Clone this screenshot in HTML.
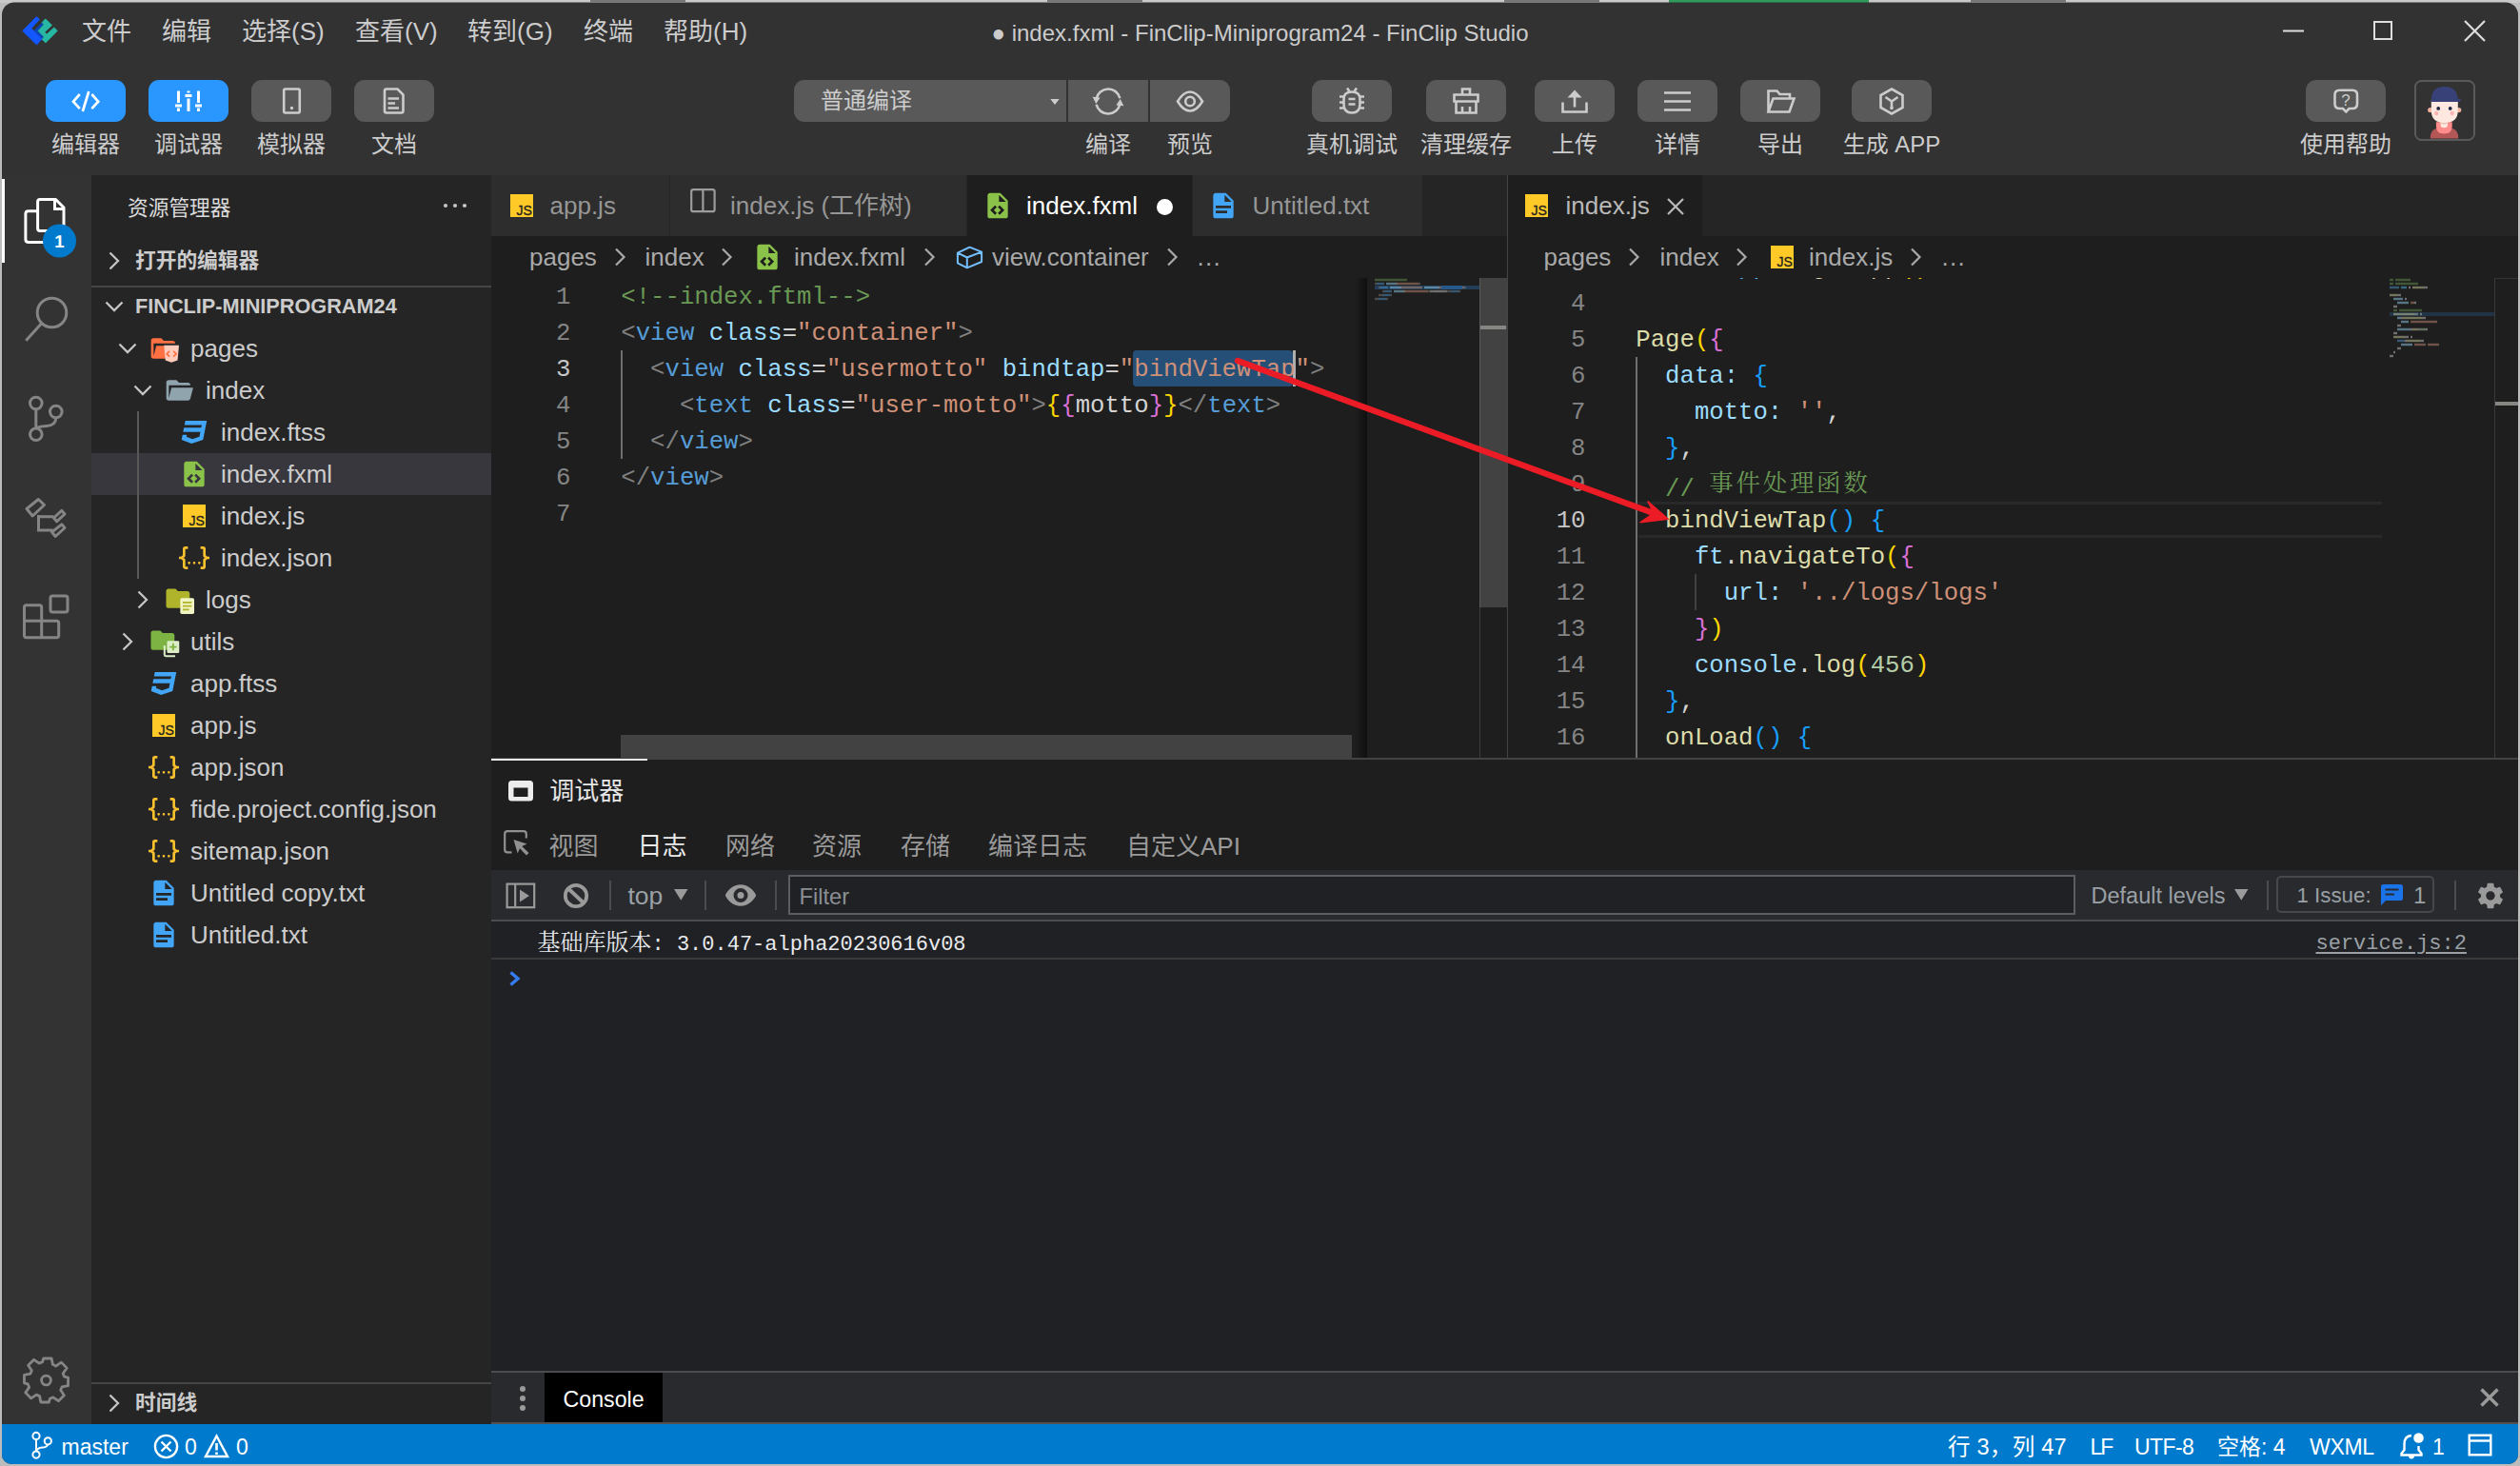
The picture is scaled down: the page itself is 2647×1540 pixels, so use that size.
<!DOCTYPE html>
<html lang="zh-CN">
<head>
<meta charset="utf-8">
<title>index.fxml - FinClip-Miniprogram24 - FinClip Studio</title>
<style>
*{box-sizing:border-box;margin:0;padding:0}
html,body{width:2647px;height:1540px;overflow:hidden}
body{position:relative;background:#bcbcbc;font-family:"Liberation Sans","Noto Sans CJK SC",sans-serif;color:#ccc}
.abs{position:absolute}
#win{position:absolute;left:0;top:0;width:2647px;height:1540px;background:#323233;clip-path:inset(2.500px 2px 2px 2px round 13px 13px 10px 10px)}
svg{display:block;overflow:visible;position:absolute}
.mono{font-family:"Liberation Mono","Noto Sans CJK SC",monospace}
/* ---------- title / menu ---------- */
#menubar{position:absolute;left:0;top:3px;width:2647px;height:62px}
.menu{position:absolute;top:0;height:62px;line-height:60px;font-size:26px;color:#ccc;white-space:nowrap}
#title{position:absolute;left:0;width:2647px;top:0;height:62px;line-height:63px;text-align:center;font-size:24px;color:#ccc;white-space:nowrap}
/* ---------- toolbar ---------- */
.tbtn{position:absolute;top:84px;width:84px;height:44px;border-radius:11px;background:#595959}
.tbtn.on{background:#2997ff}
.tbtn svg{left:0;top:0}
.tlabel{position:absolute;top:134px;height:36px;line-height:36px;font-size:24px;color:#ccc;text-align:center;white-space:nowrap;width:160px;margin-left:-80px}
.ic{fill:none;stroke:#ccc;stroke-width:2.6;stroke-linecap:butt;stroke-linejoin:miter}
</style>
</head>
<body>
<!-- desktop remnants above the window -->
<div class="abs" style="left:0;top:0;width:2647px;height:3px;background:#c9c9c9"></div>
<div class="abs" style="left:1753px;top:0;width:210px;height:3px;background:#2e9a5c"></div>
<div class="abs" style="left:620px;top:0;width:100px;height:2px;background:#777"></div>
<div class="abs" style="left:1100px;top:0;width:100px;height:2px;background:#777"></div>
<div class="abs" style="left:1580px;top:0;width:100px;height:2px;background:#777"></div>
<div class="abs" style="left:2070px;top:0;width:100px;height:2px;background:#777"></div>
<div id="win">
<!-- MENUBAR -->
<div id="menubar">
  <div id="title">● index.fxml - FinClip-Miniprogram24 - FinClip Studio</div>
  <svg style="left:0;top:-3px" width="80" height="60" viewBox="0 0 80 60">
    <path d="M38.300 17.600 L41.600 20.400 L32.900 29.800 L44.200 40.800 L38.500 47 L23.700 32.400 Z" fill="#1257ff" stroke="#1257ff" stroke-width="0.8" stroke-linejoin="round"/>
    <path d="M44 23.800 L46.200 25.600 L40 32.300 L46.200 38.700 L44 41.100 L35.700 31.900 Z" fill="#0b44b8"/>
    <path d="M47.700 19.800 L54.700 26.400 L47 33.700 L49 36 L56.900 28.700 L60.300 32.400 L47.900 45 L44 41.200 L46.200 38.800 L40 32.400 L46.200 25.600 L44 23.800 Z" fill="#27b8a4" stroke="#27b8a4" stroke-width="0.6" stroke-linejoin="round"/>
  </svg>
  <div class="menu" style="left:86px">文件</div>
  <div class="menu" style="left:170px">编辑</div>
  <div class="menu" style="left:254px">选择(S)</div>
  <div class="menu" style="left:373px">查看(V)</div>
  <div class="menu" style="left:491px">转到(G)</div>
  <div class="menu" style="left:613px">终端</div>
  <div class="menu" style="left:697px">帮助(H)</div>
  <!-- window controls -->
  <svg style="left:2396px;top:16px" width="220" height="28" viewBox="0 0 220 28">
    <path d="M2 13.5 H24" stroke="#ddd" stroke-width="2" fill="none"/>
    <rect x="98" y="4" width="18" height="18" stroke="#ddd" stroke-width="2" fill="none"/>
    <path d="M193 3 L214 24 M214 3 L193 24" stroke="#ddd" stroke-width="2.2" fill="none"/>
  </svg>
</div>
<!-- TOOLBAR -->
<div id="toolbar">
  <div class="tbtn on" style="left:48px"><svg width="84" height="44" viewBox="0 0 84 44"><path d="M35.800 15 L29 22.700 L35.800 30.200 M48.400 15 L55.200 22.700 L48.400 30.200 M45.300 12 L38.800 33" fill="none" stroke="#fff" stroke-width="2.700"/></svg></div>
  <div class="tlabel" style="left:90px">编辑器</div>
  <div class="tbtn on" style="left:156px"><svg width="84" height="44" viewBox="0 0 84 44"><path d="M31.5 11.5 V24 M31.5 29.5 V33 M28 27 H35 M42 11.5 V13.5 M42 19.5 V33 M38.5 16.5 H45.5 M52.5 11.5 V24 M52.5 29.5 V33 M49 27 H56" fill="none" stroke="#fff" stroke-width="3"/></svg></div>
  <div class="tlabel" style="left:198px">调试器</div>
  <div class="tbtn" style="left:264px"><svg width="84" height="44" viewBox="0 0 84 44"><rect x="34.2" y="9.5" width="16.6" height="25" rx="1.5" class="ic"/><circle cx="42.5" cy="29.5" r="1.7" fill="#ccc"/></svg></div>
  <div class="tlabel" style="left:306px">模拟器</div>
  <div class="tbtn" style="left:372px"><svg width="84" height="44" viewBox="0 0 84 44"><path d="M34 9.5 H45.5 L51.5 15.5 V32.5 Q51.5 34.5 49.5 34.5 H34 Q32 34.5 32 32.5 V11.5 Q32 9.5 34 9.5 Z" class="ic"/><path d="M35.5 19.5 H47 M35.5 24.5 H43 M35.5 29.5 H47" class="ic" stroke-width="2.4"/></svg></div>
  <div class="tlabel" style="left:414px">文档</div>

  <!-- compile group -->
  <div class="abs" style="left:834px;top:84px;width:286px;height:44px;background:#595959;border-radius:11px 0 0 11px"></div>
  <div class="abs" style="left:862px;top:84px;height:44px;line-height:44px;font-size:24px;color:#ccc;white-space:nowrap">普通编译</div>
  <svg style="left:1103px;top:104px" width="10" height="6" viewBox="0 0 10 6"><path d="M0.300 0 H9.700 L5 6 Z" fill="#ccc"/></svg>
  <div class="abs" style="left:1122px;top:84px;width:84px;height:44px;background:#595959"><svg width="84" height="44" viewBox="0 0 84 44" style="left:0;top:0"><path d="M54.400 19.200 A12.700 12.700 0 0 0 29.600 19.800 M29.600 25.800 A12.700 12.700 0 0 0 54.400 25.200" class="ic" stroke-width="2.600"/><path d="M25.600 17.800 L33.600 18.600 L29.300 25 Z M58.400 27.200 L50.400 26.400 L54.700 20 Z" fill="#ccc"/></svg></div>
  <div class="abs" style="left:1208px;top:84px;width:84px;height:44px;background:#595959;border-radius:0 11px 11px 0"><svg width="84" height="44" viewBox="0 0 84 44" style="left:0;top:0"><path d="M29 22.5 Q35 12.5 42 12.5 Q49 12.5 55 22.5 Q49 32.5 42 32.5 Q35 32.5 29 22.5 Z" class="ic"/><circle cx="42" cy="22.5" r="4.8" class="ic"/></svg></div>
  <div class="tlabel" style="left:1164px">编译</div>
  <div class="tlabel" style="left:1250px">预览</div>

  <!-- right group -->
  <div class="tbtn" style="left:1378px"><svg width="84" height="44" viewBox="0 0 84 44"><path d="M33.5 20 Q33.5 12.5 42 12.5 Q50.5 12.5 50.5 20 V25.5 Q50.5 34.5 42 34.5 Q33.5 34.5 33.5 25.5 Z" class="ic"/><path d="M38.5 20 H45.5 M38.5 25.5 H45.5" class="ic"/><path d="M29 17.5 H33 M29 23.5 H33 M29 29.5 H33 M51 17.5 H55 M51 23.5 H55 M51 29.5 H55 M37 8.5 L39.5 12 M47 8.5 L44.5 12" class="ic" stroke-width="2.2"/></svg></div>
  <div class="tlabel" style="left:1420px">真机调试</div>
  <div class="tbtn" style="left:1498px"><svg width="84" height="44" viewBox="0 0 84 44"><path d="M38 15.5 V9.5 H46 V15.5 M29.5 15.5 H54.5 V22.5 H29.5 Z M31.5 22.5 V34.5 H52.5 V22.5 M38 28 V34.5 M46 28 V34.5" class="ic"/></svg></div>
  <div class="tlabel" style="left:1540px">清理缓存</div>
  <div class="tbtn" style="left:1612px"><svg width="84" height="44" viewBox="0 0 84 44"><path d="M29.5 23.5 V33.5 H54.5 V23.5 M42 28.5 V14" class="ic" stroke-width="2.8"/><path d="M34.5 18.5 L42 10.5 L49.5 18.5 Z" fill="#ccc"/></svg></div>
  <div class="tlabel" style="left:1654px">上传</div>
  <div class="tbtn" style="left:1720px"><svg width="84" height="44" viewBox="0 0 84 44"><path d="M28 13.5 H56 M28 22.5 H56 M28 31.5 H56" class="ic" stroke-width="2.4"/></svg></div>
  <div class="tlabel" style="left:1762px">详情</div>
  <div class="tbtn" style="left:1828px"><svg width="84" height="44" viewBox="0 0 84 44"><path d="M29.5 33.5 V11.5 H38.5 L41.5 15 H52 V19.5 M29.5 33.5 L34.5 19.5 H56.5 L51.5 33.5 Z" class="ic"/></svg></div>
  <div class="tlabel" style="left:1870px">导出</div>
  <div class="tbtn" style="left:1945px"><svg width="84" height="44" viewBox="0 0 84 44"><path d="M42 9.5 L53.5 16 V29 L42 35.5 L30.5 29 V16 Z" class="ic"/><path d="M35.5 18 L42 22.5 L48.5 18 M42 22.5 V29" class="ic"/><circle cx="42" cy="29.5" r="1.8" fill="#ccc"/></svg></div>
  <div class="tlabel" style="left:1987px">生成 APP</div>

  <div class="tbtn" style="left:2422px"><svg width="84" height="44" viewBox="0 0 84 44"><path d="M35.500 10.800 H49 Q54 10.800 54 15.800 V25 Q54 30 49 30 H45.500 L42.300 33.400 L39 30 H35.500 Q30.500 30 30.500 25 V15.800 Q30.500 10.800 35.500 10.800 Z" class="ic" stroke-width="1.800"/></svg><div class="abs" style="left:0;top:8.500px;width:84px;text-align:center;font-size:17px;line-height:26px;color:#ccc">?</div></div>
  <div class="tlabel" style="left:2464px">使用帮助</div>
  <!-- avatar -->
  <svg style="left:2536px;top:84px" width="64" height="64" viewBox="0 0 64 64">
    <clipPath id="avc"><rect x="2" y="2" width="60" height="59.500" rx="5"/></clipPath>
    <g clip-path="url(#avc)">
      <path d="M16.900 64 V60 Q16.900 49.500 31.500 49.500 Q46.100 49.500 46.100 60 V64 Z" fill="#b35656"/>
      <path d="M22.900 44.300 H39.700 V48.500 Q39.700 56.600 31.300 56.600 Q22.900 56.600 22.900 48.500 Z" fill="#ff8b8b"/>
      <path d="M27.600 43 H35 V47.500 Q35 50.300 31.300 50.300 Q27.600 50.300 27.600 47.500 Z" fill="#ffe8e0"/>
      <path d="M27.600 44 H35 V45.800 Q31.300 47.500 27.600 45.800 Z" fill="#f0c4b4"/>
      <circle cx="16.800" cy="31.600" r="2.700" fill="#f0b09c"/><circle cx="46.600" cy="31.600" r="2.700" fill="#f0b09c"/>
      <path d="M17.800 21 H45.800 V32 Q45.800 45 31.800 45 Q17.800 45 17.800 32 Z" fill="#ffe8e0"/>
      <path d="M17.800 22.900 V21 Q17.800 6.900 31.800 6.900 Q44.500 6.900 45.700 19.800 L49.400 20.600 Q49 23.200 46 22.900 Z" fill="#384278"/>
      <circle cx="25.200" cy="29.900" r="1.900" fill="#1e2240"/><circle cx="37.700" cy="29.900" r="1.900" fill="#1e2240"/>
      <circle cx="23.200" cy="35" r="2.200" fill="#ffb3b3"/><circle cx="39.700" cy="35" r="2.200" fill="#ffb3b3"/>
    </g>
    <rect x="1" y="1" width="62" height="62" rx="6.500" fill="none" stroke="#5a5a5a" stroke-width="2"/>
  </svg>
</div>
<!-- ACTIVITY BAR -->
<div id="activity" class="abs" style="left:0;top:184px;width:96px;height:1312px;background:#333">
  <div class="abs" style="left:2px;top:4px;width:2.500px;height:88px;background:#fff"></div>
</div>
<svg style="left:0;top:184px" width="96" height="1312" viewBox="0 184 96 1312">
  <g fill="none" stroke="#fff" stroke-width="3" stroke-linejoin="round">
    <path d="M42 209.5 H58.5 L67 218 V242.5 H42 Q39.6 242.5 39.6 240 V212 Q39.6 209.5 42 209.5 Z"/>
    <path d="M57.5 210 V219.5 H66.5" stroke-linejoin="miter"/>
    <path d="M39 221.7 H29.8 Q26.9 221.7 26.9 224.6 V251.5 Q26.9 254.4 29.8 254.4 H50"/>
  </g>
  <circle cx="62.5" cy="253" r="17.5" fill="#007acc"/>
  <g fill="none" stroke="#858585" stroke-width="3" stroke-linejoin="round">
    <!-- search -->
    <circle cx="54.5" cy="328.5" r="15.3"/>
    <path d="M43.8 339.5 L27.3 357.8"/>
    <!-- source control -->
    <circle cx="37.8" cy="423.5" r="6.3"/>
    <circle cx="58.8" cy="432.5" r="6.3"/>
    <circle cx="37.8" cy="456.3" r="6.3"/>
    <path d="M37.8 430 V450 M58.8 439 Q58.5 447 49 447.5 Q40 448 38.3 450"/>
    <!-- flow icon -->
    <path d="M28 534.500 L40.400 524.500 L46.500 530.500 L34.200 542 Z"/>
    <path d="M56.500 544 L64.800 536.300 L68 540 L59.600 547.800 Z"/>
    <path d="M54.500 559 L64.800 550.800 L68 554.500 L58.200 563.500 Z"/>
    <path d="M40.500 541 V557 H55.500 M40.500 542.800 H56.500" stroke-linejoin="miter"/>
    <!-- extensions -->
    <path d="M25.5 652.3 V638 Q25.5 635.8 27.7 635.8 H41.5 Q43.7 635.8 43.7 638 V652.3 H59.5 Q61.7 652.3 61.7 654.5 V667.5 Q61.7 669.7 59.5 669.7 H27.7 Q25.5 669.7 25.5 667.5 V652.3 H43.7 V669.7"/>
    <rect x="53" y="626" width="18" height="17" rx="2.2"/>
  </g>
  <!-- gear -->
  <g transform="translate(48.5 1450) scale(0.94)">
    <path id="gearp" fill="none" stroke="#858585" stroke-width="3" stroke-linejoin="round" d="M-4.5 -23 H4.5 L5.8 -16.2 L9.3 -14.4 L15.3 -18.6 L21.6 -12.2 L17.3 -6.2 L18.8 -2.5 L23 -1.5 V7.5 L16.2 8.8 L14.6 12.4 L18.6 18.3 L12.2 24.6 L6.3 20.5 L2.7 22 L1.5 26 H-7.5 L-8.8 19.2 L-12.4 17.6 L-18.3 21.6 L-24.6 15.2 L-20.5 9.3 L-22 5.7 L-26 4.5 V-4.5 L-19.2 -5.8 L-17.6 -9.4 L-21.6 -15.3 L-15.2 -21.6 L-9.3 -17.5 L-5.7 -19 Z" transform="translate(1.5 -1.5)"/>
    <circle cx="0" cy="0" r="5.2" fill="none" stroke="#858585" stroke-width="3"/>
  </g>
</svg>
<div class="abs" style="left:45px;top:235.500px;width:35px;height:35px;line-height:35px;text-align:center;font-size:18.500px;font-weight:bold;color:#fff;font-family:'Liberation Sans',sans-serif;text-rendering:geometricPrecision">1</div>
<!-- SIDEBAR -->
<div id="sidebar" class="abs" style="left:96px;top:184px;width:420px;height:1312px;background:#252526"></div>
<style>.sbh{position:absolute;font-size:21.7px;line-height:32px;height:32px;white-space:nowrap;color:#ccc}.sbh.b{font-weight:bold}.trow{position:absolute;left:96px;width:420px;height:44px}.tname{position:absolute;font-size:26px;line-height:44px;height:44px;color:#ccc;white-space:nowrap}</style>
<div class="sbh" style="left:134px;top:203px;color:#dcdcdc">资源管理器</div>
<svg style="left:464px;top:212px" width="28" height="8" viewBox="0 0 28 8"><circle cx="4" cy="4" r="2.1" fill="#c5c5c5"/><circle cx="14" cy="4" r="2.1" fill="#c5c5c5"/><circle cx="24" cy="4" r="2.1" fill="#c5c5c5"/></svg>
<svg style="left:104px;top:258px" width="32" height="32" viewBox="0 0 32 32"><path d="M11.5 7.5 L20 16 L11.5 24.5" fill="none" stroke="#c5c5c5" stroke-width="2.3"/></svg><div class="sbh b" style="left:142px;top:258px">打开的编辑器</div>
<div class="abs" style="left:96px;top:300px;width:420px;height:2px;background:#454545"></div>
<svg style="left:104px;top:306px" width="32" height="32" viewBox="0 0 32 32"><path d="M7.5 11.5 L16 20 L24.5 11.5" fill="none" stroke="#c5c5c5" stroke-width="2.3"/></svg><div class="sbh b" style="left:142px;top:306px">FINCLIP-MINIPROGRAM24</div>
<svg style="left:117.5px;top:350px" width="32" height="32" viewBox="0 0 32 32"><path d="M7.5 11.5 L16 20 L24.5 11.5" fill="none" stroke="#c5c5c5" stroke-width="2.3"/></svg><svg style="left:156px;top:350px" width="32" height="32" viewBox="0 0 24 24"><path d="M19 20H4a2 2 0 0 1-2-2V6a2 2 0 0 1 2-2h6l2 2h7a2 2 0 0 1 2 2H4v10l2.14-8h17.07l-2.28 8.5c-.23.87-1.01 1.5-1.93 1.5z" fill="#ff7043"/><path d="M12.2 9.6 H24 L22.9 21.4 L18.1 23 L13.3 21.4 Z" fill="#ffccbc"/><path d="M16.6 14.2 L14.4 16.3 L16.6 18.4 M19.6 14.2 L21.8 16.3 L19.6 18.4" fill="none" stroke="#ff7043" stroke-width="1.3"/></svg><div class="tname" style="left:200.1px;top:344px">pages</div>
<svg style="left:133.5px;top:394px" width="32" height="32" viewBox="0 0 32 32"><path d="M7.5 11.5 L16 20 L24.5 11.5" fill="none" stroke="#c5c5c5" stroke-width="2.3"/></svg><svg style="left:172px;top:394px" width="32" height="32" viewBox="0 0 24 24"><path d="M19 20H4a2 2 0 0 1-2-2V6a2 2 0 0 1 2-2h6l2 2h7a2 2 0 0 1 2 2H4v10l2.14-8h17.07l-2.28 8.5c-.23.87-1.01 1.5-1.93 1.5z" fill="#90a4ae"/></svg><div class="tname" style="left:216.1px;top:388px">index</div>
<svg style="left:188px;top:438px" width="32" height="32" viewBox="0 0 24 24"><path d="M5 3l-.65 3.34h13.59L17.5 8.5H3.92l-.66 3.33h13.59l-.76 3.81-5.48 1.81-4.75-1.81.33-1.64H2.85l-.79 4 7.85 3 9.05-3 1.2-6.03.24-1.21L21.94 3H5z" fill="#42a5f5"/></svg><div class="tname" style="left:232.1px;top:432px">index.ftss</div>
<div class="trow" style="top:476px;background:#37373d"></div>
<svg style="left:188px;top:482px" width="32" height="32" viewBox="0 0 24 24"><path d="M13 9h5.5L13 3.5V9M6 2h8l6 6v12a2 2 0 0 1-2 2H6a2 2 0 0 1-2-2V4c0-1.11.89-2 2-2m.12 13.5l3.74 3.74 1.42-1.41-2.33-2.33 2.33-2.33-1.42-1.41-3.74 3.74m11.16 0l-3.74-3.74-1.42 1.41 2.33 2.33-2.33 2.33 1.42 1.41 3.74-3.74z" fill="#8bc34a"/></svg><div class="tname" style="left:232.1px;top:476px">index.fxml</div>
<svg style="left:188px;top:526px" width="32" height="32" viewBox="0 0 24 24"><rect x="3" y="3" width="18" height="18" fill="#ffca28"/><text x="20.2" y="19.6" text-anchor="end" font-family="Liberation Sans, sans-serif" font-size="11.300" fill="#1f1f1f" stroke="#1f1f1f" stroke-width="0.250" textLength="12.300" lengthAdjust="spacingAndGlyphs">JS</text></svg><div class="tname" style="left:232.1px;top:520px">index.js</div>
<svg style="left:188px;top:570px" width="32" height="32" viewBox="0 0 24 24"><path d="M5 3h2v2H5v5a2 2 0 0 1-2 2 2 2 0 0 1 2 2v5h2v2H5c-1.07-.27-2-.9-2-2v-4a2 2 0 0 0-2-2H0v-2h1a2 2 0 0 0 2-2V5a2 2 0 0 1 2-2m14 0a2 2 0 0 1 2 2v4a2 2 0 0 0 2 2h1v2h-1a2 2 0 0 0-2 2v4a2 2 0 0 1-2 2h-2v-2h2v-5a2 2 0 0 1 2-2 2 2 0 0 1-2-2V5h-2V3h2m-7 12a1 1 0 0 1 1 1 1 1 0 0 1-1 1 1 1 0 0 1-1-1 1 1 0 0 1 1-1m-4 0a1 1 0 0 1 1 1 1 1 0 0 1-1 1 1 1 0 0 1-1-1 1 1 0 0 1 1-1m8 0a1 1 0 0 1 1 1 1 1 0 0 1-1 1 1 1 0 0 1-1-1 1 1 0 0 1 1-1z" fill="#fbc02d"/></svg><div class="tname" style="left:232.1px;top:564px">index.json</div>
<svg style="left:133.5px;top:614px" width="32" height="32" viewBox="0 0 32 32"><path d="M11.5 7.5 L20 16 L11.5 24.5" fill="none" stroke="#c5c5c5" stroke-width="2.3"/></svg><svg style="left:172px;top:614px" width="32" height="32" viewBox="0 0 24 24"><path d="M10 4H4c-1.11 0-2 .89-2 2v12a2 2 0 0 0 2 2h16a2 2 0 0 0 2-2V8c0-1.11-.9-2-2-2h-8l-2-2z" fill="#afb42b" transform="translate(0 -0.5) scale(0.93 0.95)"/><rect x="13" y="10.6" width="11" height="12.6" rx="1.2" fill="#f0f4c3"/><path d="M15 14.2 H22 M15 17 H22 M15 19.8 H20" stroke="#afb42b" stroke-width="1.3" fill="none"/></svg><div class="tname" style="left:216.1px;top:608px">logs</div>
<svg style="left:117.5px;top:658px" width="32" height="32" viewBox="0 0 32 32"><path d="M11.5 7.5 L20 16 L11.5 24.5" fill="none" stroke="#c5c5c5" stroke-width="2.3"/></svg><svg style="left:156px;top:658px" width="32" height="32" viewBox="0 0 24 24"><path d="M10 4H4c-1.11 0-2 .89-2 2v12a2 2 0 0 0 2 2h16a2 2 0 0 0 2-2V8c0-1.11-.9-2-2-2h-8l-2-2z" fill="#7cb342" transform="translate(0 -0.5) scale(0.93 0.95)"/><path d="M12.6 15 V22.4 Q12.6 23.4 13.6 23.4 H21" fill="none" stroke="#dcedc8" stroke-width="1.5"/><rect x="14.6" y="11.4" width="9.6" height="9.6" rx="1" fill="#dcedc8"/><path d="M19.4 13.4 V19 M16.6 16.2 H22.2" stroke="#7cb342" stroke-width="1.4" fill="none"/></svg><div class="tname" style="left:200.1px;top:652px">utils</div>
<svg style="left:156px;top:702px" width="32" height="32" viewBox="0 0 24 24"><path d="M5 3l-.65 3.34h13.59L17.5 8.5H3.92l-.66 3.33h13.59l-.76 3.81-5.48 1.81-4.75-1.81.33-1.64H2.85l-.79 4 7.85 3 9.05-3 1.2-6.03.24-1.21L21.94 3H5z" fill="#42a5f5"/></svg><div class="tname" style="left:200.1px;top:696px">app.ftss</div>
<svg style="left:156px;top:746px" width="32" height="32" viewBox="0 0 24 24"><rect x="3" y="3" width="18" height="18" fill="#ffca28"/><text x="20.2" y="19.6" text-anchor="end" font-family="Liberation Sans, sans-serif" font-size="11.300" fill="#1f1f1f" stroke="#1f1f1f" stroke-width="0.250" textLength="12.300" lengthAdjust="spacingAndGlyphs">JS</text></svg><div class="tname" style="left:200.1px;top:740px">app.js</div>
<svg style="left:156px;top:790px" width="32" height="32" viewBox="0 0 24 24"><path d="M5 3h2v2H5v5a2 2 0 0 1-2 2 2 2 0 0 1 2 2v5h2v2H5c-1.07-.27-2-.9-2-2v-4a2 2 0 0 0-2-2H0v-2h1a2 2 0 0 0 2-2V5a2 2 0 0 1 2-2m14 0a2 2 0 0 1 2 2v4a2 2 0 0 0 2 2h1v2h-1a2 2 0 0 0-2 2v4a2 2 0 0 1-2 2h-2v-2h2v-5a2 2 0 0 1 2-2 2 2 0 0 1-2-2V5h-2V3h2m-7 12a1 1 0 0 1 1 1 1 1 0 0 1-1 1 1 1 0 0 1-1-1 1 1 0 0 1 1-1m-4 0a1 1 0 0 1 1 1 1 1 0 0 1-1 1 1 1 0 0 1-1-1 1 1 0 0 1 1-1m8 0a1 1 0 0 1 1 1 1 1 0 0 1-1 1 1 1 0 0 1-1-1 1 1 0 0 1 1-1z" fill="#fbc02d"/></svg><div class="tname" style="left:200.1px;top:784px">app.json</div>
<svg style="left:156px;top:834px" width="32" height="32" viewBox="0 0 24 24"><path d="M5 3h2v2H5v5a2 2 0 0 1-2 2 2 2 0 0 1 2 2v5h2v2H5c-1.07-.27-2-.9-2-2v-4a2 2 0 0 0-2-2H0v-2h1a2 2 0 0 0 2-2V5a2 2 0 0 1 2-2m14 0a2 2 0 0 1 2 2v4a2 2 0 0 0 2 2h1v2h-1a2 2 0 0 0-2 2v4a2 2 0 0 1-2 2h-2v-2h2v-5a2 2 0 0 1 2-2 2 2 0 0 1-2-2V5h-2V3h2m-7 12a1 1 0 0 1 1 1 1 1 0 0 1-1 1 1 1 0 0 1-1-1 1 1 0 0 1 1-1m-4 0a1 1 0 0 1 1 1 1 1 0 0 1-1 1 1 1 0 0 1-1-1 1 1 0 0 1 1-1m8 0a1 1 0 0 1 1 1 1 1 0 0 1-1 1 1 1 0 0 1-1-1 1 1 0 0 1 1-1z" fill="#fbc02d"/></svg><div class="tname" style="left:200.1px;top:828px">fide.project.config.json</div>
<svg style="left:156px;top:878px" width="32" height="32" viewBox="0 0 24 24"><path d="M5 3h2v2H5v5a2 2 0 0 1-2 2 2 2 0 0 1 2 2v5h2v2H5c-1.07-.27-2-.9-2-2v-4a2 2 0 0 0-2-2H0v-2h1a2 2 0 0 0 2-2V5a2 2 0 0 1 2-2m14 0a2 2 0 0 1 2 2v4a2 2 0 0 0 2 2h1v2h-1a2 2 0 0 0-2 2v4a2 2 0 0 1-2 2h-2v-2h2v-5a2 2 0 0 1 2-2 2 2 0 0 1-2-2V5h-2V3h2m-7 12a1 1 0 0 1 1 1 1 1 0 0 1-1 1 1 1 0 0 1-1-1 1 1 0 0 1 1-1m-4 0a1 1 0 0 1 1 1 1 1 0 0 1-1 1 1 1 0 0 1-1-1 1 1 0 0 1 1-1m8 0a1 1 0 0 1 1 1 1 1 0 0 1-1 1 1 1 0 0 1-1-1 1 1 0 0 1 1-1z" fill="#fbc02d"/></svg><div class="tname" style="left:200.1px;top:872px">sitemap.json</div>
<svg style="left:156px;top:922px" width="32" height="32" viewBox="0 0 24 24"><path d="M13 9h5.5L13 3.5V9M6 2h8l6 6v12a2 2 0 0 1-2 2H6a2 2 0 0 1-2-2V4c0-1.11.89-2 2-2m9 16v-2H6v2h9m3-4v-2H6v2h12z" fill="#42a5f5"/></svg><div class="tname" style="left:200.1px;top:916px">Untitled copy.txt</div>
<svg style="left:156px;top:966px" width="32" height="32" viewBox="0 0 24 24"><path d="M13 9h5.5L13 3.5V9M6 2h8l6 6v12a2 2 0 0 1-2 2H6a2 2 0 0 1-2-2V4c0-1.11.89-2 2-2m9 16v-2H6v2h9m3-4v-2H6v2h12z" fill="#42a5f5"/></svg><div class="tname" style="left:200.1px;top:960px">Untitled.txt</div>
<div class="abs" style="left:144px;top:432px;width:2px;height:176px;background:#585858"></div>
<div class="abs" style="left:96px;top:1452px;width:420px;height:2px;background:#454545"></div>
<svg style="left:104px;top:1458px" width="32" height="32" viewBox="0 0 32 32"><path d="M11.5 7.5 L20 16 L11.5 24.5" fill="none" stroke="#c5c5c5" stroke-width="2.3"/></svg><div class="sbh b" style="left:142px;top:1458px">时间线</div>
<!-- EDITORS -->
<style>
.tabbar{position:absolute;top:184px;height:64px;background:#252526}
.tab{position:absolute;top:184px;height:64px;background:#2d2d2d}
.tab.act{background:#1e1e1e}
.tl{position:absolute;top:184px;height:64px;line-height:64px;font-size:26px;color:#969696;white-space:nowrap}
.bc{position:absolute;top:248px;height:44px;line-height:44px;font-size:26px;color:#a9a9a9;white-space:nowrap}
.code{position:absolute;height:38px;line-height:42px;font-family:"Liberation Mono","Noto Serif CJK SC",monospace;font-size:25.66px;white-space:pre;color:#d4d4d4}
.ln{position:absolute;height:38px;line-height:42px;font-family:"Liberation Mono",monospace;font-size:25.66px;color:#858585;text-align:right;width:80px;white-space:pre}
.ln.cur{color:#c6c6c6}
</style>
<div id="ed1" class="abs" style="left:516px;top:184px;width:1067px;height:613px;background:#1e1e1e"></div>
<div class="abs" style="left:1583px;top:184px;width:1px;height:613px;background:#444"></div>
<div id="ed2" class="abs" style="left:1584px;top:184px;width:1063px;height:613px;background:#1e1e1e"></div>
<div class="tabbar" style="left:516px;width:1067px"></div>
<div class="tab" style="left:516px;width:187px"></div><svg style="left:531.7px;top:200px" width="32" height="32" viewBox="0 0 24 24"><rect x="3" y="3" width="18" height="18" fill="#ffca28"/><text x="20.2" y="19.6" text-anchor="end" font-family="Liberation Sans, sans-serif" font-size="11.300" fill="#1f1f1f" stroke="#1f1f1f" stroke-width="0.250" textLength="12.300" lengthAdjust="spacingAndGlyphs">JS</text></svg><div class="tl" style="left:577.5px">app.js</div>
<div class="tab" style="left:704px;width:311px"></div><svg style="left:725px;top:198px" width="27" height="26" viewBox="0 0 27 26"><rect x="1.200" y="1.200" width="24.400" height="23" rx="2" fill="none" stroke="#9d9d9d" stroke-width="2.200"/><path d="M13.400 1.200 V24.200" stroke="#9d9d9d" stroke-width="2.200"/></svg><div class="tl" style="left:767px">index.js (工作树)</div>
<div class="tab act" style="left:1016px;width:236px"></div><svg style="left:1032px;top:200px" width="32" height="32" viewBox="0 0 24 24"><path d="M13 9h5.5L13 3.5V9M6 2h8l6 6v12a2 2 0 0 1-2 2H6a2 2 0 0 1-2-2V4c0-1.11.89-2 2-2m.12 13.5l3.74 3.74 1.42-1.41-2.33-2.33 2.33-2.33-1.42-1.41-3.74 3.74m11.16 0l-3.74-3.74-1.42 1.41 2.33 2.33-2.33 2.33 1.42 1.41 3.74-3.74z" fill="#8bc34a"/></svg><div class="tl" style="left:1078px;color:#fff">index.fxml</div><div class="abs" style="left:1214.700px;top:209px;width:17px;height:17px;border-radius:50%;background:#fff"></div>
<div class="tab" style="left:1253px;width:241px"></div><svg style="left:1269px;top:200px" width="32" height="32" viewBox="0 0 24 24"><path d="M13 9h5.5L13 3.5V9M6 2h8l6 6v12a2 2 0 0 1-2 2H6a2 2 0 0 1-2-2V4c0-1.11.89-2 2-2m9 16v-2H6v2h9m3-4v-2H6v2h12z" fill="#42a5f5"/></svg><div class="tl" style="left:1315.5px">Untitled.txt</div>
<div class="tabbar" style="left:1584px;width:1063px"></div>
<div class="tab act" style="left:1584px;width:204px"></div><svg style="left:1598px;top:200px" width="32" height="32" viewBox="0 0 24 24"><rect x="3" y="3" width="18" height="18" fill="#ffca28"/><text x="20.2" y="19.6" text-anchor="end" font-family="Liberation Sans, sans-serif" font-size="11.300" fill="#1f1f1f" stroke="#1f1f1f" stroke-width="0.250" textLength="12.300" lengthAdjust="spacingAndGlyphs">JS</text></svg><div class="tl" style="left:1644.5px;color:#b9b9b9">index.js</div><svg style="left:1750px;top:207px" width="20" height="20" viewBox="0 0 20 20"><path d="M2 2 L18 18 M18 2 L2 18" stroke="#b9b9b9" stroke-width="2.2" fill="none"/></svg>
<div class="bc" style="left:556px">pages</div><svg style="left:644px;top:258px" width="16" height="24" viewBox="0 0 16 24"><path d="M3 3.5 L11.5 12 L3 20.5" fill="none" stroke="#a9a9a9" stroke-width="2.2"/></svg><div class="bc" style="left:677.5px">index</div><svg style="left:756px;top:258px" width="16" height="24" viewBox="0 0 16 24"><path d="M3 3.5 L11.5 12 L3 20.5" fill="none" stroke="#a9a9a9" stroke-width="2.2"/></svg><svg style="left:790px;top:254px" width="32" height="32" viewBox="0 0 24 24"><path d="M13 9h5.5L13 3.5V9M6 2h8l6 6v12a2 2 0 0 1-2 2H6a2 2 0 0 1-2-2V4c0-1.11.89-2 2-2m.12 13.5l3.74 3.74 1.42-1.41-2.33-2.33 2.33-2.33-1.42-1.41-3.74 3.74m11.16 0l-3.74-3.74-1.42 1.41 2.33 2.33-2.33 2.33 1.42 1.41 3.74-3.74z" fill="#8bc34a"/></svg><div class="bc" style="left:834px">index.fxml</div><svg style="left:968.5px;top:258px" width="16" height="24" viewBox="0 0 16 24"><path d="M3 3.5 L11.5 12 L3 20.5" fill="none" stroke="#a9a9a9" stroke-width="2.2"/></svg><svg style="left:1003.500px;top:256.500px" width="29" height="27" viewBox="0 0 32 30"><path d="M16 3 L30 8.5 V20 L13 27 L2 21.5 V9.5 Z M2 9.5 L13 15 L30 8.5 M13 15 V27" fill="none" stroke="#75beff" stroke-width="2.2" stroke-linejoin="round"/></svg><div class="bc" style="left:1042px">view.container</div><svg style="left:1223.5px;top:258px" width="16" height="24" viewBox="0 0 16 24"><path d="M3 3.5 L11.5 12 L3 20.5" fill="none" stroke="#a9a9a9" stroke-width="2.2"/></svg><div class="bc" style="left:1257.500px;letter-spacing:1.300px">...</div>
<div class="bc" style="left:1621.5px">pages</div><svg style="left:1709px;top:258px" width="16" height="24" viewBox="0 0 16 24"><path d="M3 3.5 L11.5 12 L3 20.5" fill="none" stroke="#a9a9a9" stroke-width="2.2"/></svg><div class="bc" style="left:1743.5px">index</div><svg style="left:1822px;top:258px" width="16" height="24" viewBox="0 0 16 24"><path d="M3 3.5 L11.5 12 L3 20.5" fill="none" stroke="#a9a9a9" stroke-width="2.2"/></svg><svg style="left:1856px;top:254px" width="32" height="32" viewBox="0 0 24 24"><rect x="3" y="3" width="18" height="18" fill="#ffca28"/><text x="20.2" y="19.6" text-anchor="end" font-family="Liberation Sans, sans-serif" font-size="11.300" fill="#1f1f1f" stroke="#1f1f1f" stroke-width="0.250" textLength="12.300" lengthAdjust="spacingAndGlyphs">JS</text></svg><div class="bc" style="left:1900px">index.js</div><svg style="left:2004.5px;top:258px" width="16" height="24" viewBox="0 0 16 24"><path d="M3 3.5 L11.5 12 L3 20.5" fill="none" stroke="#a9a9a9" stroke-width="2.2"/></svg><div class="bc" style="left:2039.500px;letter-spacing:1.300px">...</div>
<div class="abs" style="left:516px;top:292px;width:1067px;height:505px;overflow:hidden">
<div class="abs" style="left:674.3px;top:76px;width:168.2px;height:38px;background:#264f78;border-radius:4px"></div><div class="abs" style="left:842.0px;top:76px;width:3.2px;height:38px;background:#aeafad"></div><div class="abs" style="left:136.3px;top:76px;width:2px;height:114px;background:#707070"></div>
<div class="ln" style="left:3.5px;top:0px">1</div><div class="code" style="left:136.3px;top:0px"><span style="color:#6a9955">&lt;!--index.ftml--&gt;</span></div>
<div class="ln" style="left:3.5px;top:38px">2</div><div class="code" style="left:136.3px;top:38px"><span style="color:#808080">&lt;</span><span style="color:#569cd6">view</span><span style="color:#d4d4d4"> </span><span style="color:#9cdcfe">class</span><span style="color:#d4d4d4">=</span><span style="color:#ce9178">"container"</span><span style="color:#808080">&gt;</span></div>
<div class="ln cur" style="left:3.5px;top:76px">3</div><div class="code" style="left:136.3px;top:76px"><span style="color:#d4d4d4">  </span><span style="color:#808080">&lt;</span><span style="color:#569cd6">view</span><span style="color:#d4d4d4"> </span><span style="color:#9cdcfe">class</span><span style="color:#d4d4d4">=</span><span style="color:#ce9178">"usermotto"</span><span style="color:#d4d4d4"> </span><span style="color:#9cdcfe">bindtap</span><span style="color:#d4d4d4">=</span><span style="color:#ce9178">"bindViewTap"</span><span style="color:#808080">&gt;</span></div>
<div class="ln" style="left:3.5px;top:114px">4</div><div class="code" style="left:136.3px;top:114px"><span style="color:#d4d4d4">    </span><span style="color:#808080">&lt;</span><span style="color:#569cd6">text</span><span style="color:#d4d4d4"> </span><span style="color:#9cdcfe">class</span><span style="color:#d4d4d4">=</span><span style="color:#ce9178">"user-motto"</span><span style="color:#808080">&gt;</span><span style="color:#ffd700">{</span><span style="color:#da70d6">{</span><span style="color:#d4d4d4">motto</span><span style="color:#da70d6">}</span><span style="color:#ffd700">}</span><span style="color:#808080">&lt;/</span><span style="color:#569cd6">text</span><span style="color:#808080">&gt;</span></div>
<div class="ln" style="left:3.5px;top:152px">5</div><div class="code" style="left:136.3px;top:152px"><span style="color:#d4d4d4">  </span><span style="color:#808080">&lt;/</span><span style="color:#569cd6">view</span><span style="color:#808080">&gt;</span></div>
<div class="ln" style="left:3.5px;top:190px">6</div><div class="code" style="left:136.3px;top:190px"><span style="color:#808080">&lt;/</span><span style="color:#569cd6">view</span><span style="color:#808080">&gt;</span></div>
<div class="ln" style="left:3.5px;top:228px">7</div>
<div class="abs" style="left:908px;top:0;width:12px;height:505px;background:linear-gradient(to right,rgba(0,0,0,0),rgba(0,0,0,.5))"></div><div class="abs" style="left:920px;top:0;width:118px;height:505px;background:#1e1e1e"></div><svg style="left:928px;top:0px" width="110" height="120" viewBox="0 0 110 120"><rect x="0" y="8" width="110" height="4" fill="#234566" opacity="0.8"/><rect x="0" y="0.8" width="34" height="2.4" fill="#6a9955" opacity="0.46"/><rect x="0" y="4.8" width="2" height="2.4" fill="#808080" opacity="0.46"/><rect x="2" y="4.8" width="8" height="2.4" fill="#569cd6" opacity="0.46"/><rect x="12" y="4.8" width="10" height="2.4" fill="#9cdcfe" opacity="0.46"/><rect x="22" y="4.8" width="2" height="2.4" fill="#d4d4d4" opacity="0.46"/><rect x="24" y="4.8" width="22" height="2.4" fill="#ce9178" opacity="0.46"/><rect x="46" y="4.8" width="2" height="2.4" fill="#808080" opacity="0.46"/><rect x="4" y="8.8" width="2" height="2.4" fill="#808080" opacity="0.46"/><rect x="6" y="8.8" width="8" height="2.4" fill="#569cd6" opacity="0.46"/><rect x="16" y="8.8" width="10" height="2.4" fill="#9cdcfe" opacity="0.46"/><rect x="26" y="8.8" width="2" height="2.4" fill="#d4d4d4" opacity="0.46"/><rect x="28" y="8.8" width="22" height="2.4" fill="#ce9178" opacity="0.46"/><rect x="52" y="8.8" width="14" height="2.4" fill="#9cdcfe" opacity="0.46"/><rect x="66" y="8.8" width="2" height="2.4" fill="#d4d4d4" opacity="0.46"/><rect x="68" y="8.8" width="26" height="2.4" fill="#ce9178" opacity="0.46"/><rect x="94" y="8.8" width="2" height="2.4" fill="#808080" opacity="0.46"/><rect x="8" y="12.8" width="2" height="2.4" fill="#808080" opacity="0.46"/><rect x="10" y="12.8" width="8" height="2.4" fill="#569cd6" opacity="0.46"/><rect x="20" y="12.8" width="10" height="2.4" fill="#9cdcfe" opacity="0.46"/><rect x="30" y="12.8" width="2" height="2.4" fill="#d4d4d4" opacity="0.46"/><rect x="32" y="12.8" width="24" height="2.4" fill="#ce9178" opacity="0.46"/><rect x="56" y="12.8" width="2" height="2.4" fill="#808080" opacity="0.46"/><rect x="58" y="12.8" width="2" height="2.4" fill="#c8c8c8" opacity="0.46"/><rect x="60" y="12.8" width="2" height="2.4" fill="#c8c8c8" opacity="0.46"/><rect x="62" y="12.8" width="10" height="2.4" fill="#d4d4d4" opacity="0.46"/><rect x="72" y="12.8" width="2" height="2.4" fill="#c8c8c8" opacity="0.46"/><rect x="74" y="12.8" width="2" height="2.4" fill="#c8c8c8" opacity="0.46"/><rect x="76" y="12.8" width="4" height="2.4" fill="#808080" opacity="0.46"/><rect x="80" y="12.8" width="8" height="2.4" fill="#569cd6" opacity="0.46"/><rect x="88" y="12.8" width="2" height="2.4" fill="#808080" opacity="0.46"/><rect x="4" y="16.8" width="4" height="2.4" fill="#808080" opacity="0.46"/><rect x="8" y="16.8" width="8" height="2.4" fill="#569cd6" opacity="0.46"/><rect x="16" y="16.8" width="2" height="2.4" fill="#808080" opacity="0.46"/><rect x="0" y="20.8" width="4" height="2.4" fill="#808080" opacity="0.46"/><rect x="4" y="20.8" width="8" height="2.4" fill="#569cd6" opacity="0.46"/><rect x="12" y="20.8" width="2" height="2.4" fill="#808080" opacity="0.46"/><rect x="70" y="8" width="22" height="4" fill="#27588a"/></svg><div class="abs" style="left:1038px;top:0;width:1px;height:505px;background:#3c3c3c"></div><div class="abs" style="left:1039px;top:0;width:28px;height:346px;background:#424242"></div><div class="abs" style="left:1038px;top:0;width:1px;height:346px;background:#5a5a5a"></div><div class="abs" style="left:1039px;top:50px;width:27px;height:4px;background:#868683"></div><div class="abs" style="left:136px;top:480px;width:768px;height:25px;background:#424242"></div></div>
<div class="abs" style="left:1584px;top:292px;width:1063px;height:505px;overflow:hidden">
<div class="abs" style="left:137px;top:234.6px;width:781px;height:38px;border-top:3px solid #292929;border-bottom:3px solid #292929"></div><div class="abs" style="left:134.3px;top:82.6px;width:2px;height:456px;background:#707070"></div><div class="abs" style="left:195.9px;top:310.6px;width:2px;height:38px;background:#404040"></div>
<div class="code" style="left:134.3px;top:-31.4px"><span style="color:#569cd6">const</span><span style="color:#d4d4d4"> </span><span style="color:#4fc1ff">app</span><span style="color:#d4d4d4"> = </span><span style="color:#dcdcaa">getApp</span><span style="color:#ffd700">()</span></div>
<div class="ln" style="left:1.5px;top:6.6px">4</div>
<div class="ln" style="left:1.5px;top:44.6px">5</div><div class="code" style="left:134.3px;top:44.6px"><span style="color:#dcdcaa">Page</span><span style="color:#ffd700">(</span><span style="color:#da70d6">{</span></div>
<div class="ln" style="left:1.5px;top:82.6px">6</div><div class="code" style="left:134.3px;top:82.6px"><span style="color:#d4d4d4">  </span><span style="color:#9cdcfe">data</span><span style="color:#9cdcfe">:</span><span style="color:#d4d4d4"> </span><span style="color:#179fff">{</span></div>
<div class="ln" style="left:1.5px;top:120.6px">7</div><div class="code" style="left:134.3px;top:120.6px"><span style="color:#d4d4d4">    </span><span style="color:#9cdcfe">motto:</span><span style="color:#d4d4d4"> </span><span style="color:#ce9178">''</span><span style="color:#d4d4d4">,</span></div>
<div class="ln" style="left:1.5px;top:158.6px">8</div><div class="code" style="left:134.3px;top:158.6px"><span style="color:#d4d4d4">  </span><span style="color:#179fff">}</span><span style="color:#d4d4d4">,</span></div>
<div class="ln" style="left:1.5px;top:196.6px">9</div><div class="code" style="left:134.3px;top:196.6px"><span style="color:#d4d4d4">  </span><span style="color:#6a9955">// </span><span style="color:#6a9955;font-family:'Noto Serif CJK SC',serif;font-size:25.500px;letter-spacing:2.700px;position:relative;top:-4.500px">事件处理函数</span></div>
<div class="ln cur" style="left:1.5px;top:234.6px">10</div><div class="code" style="left:134.3px;top:234.6px"><span style="color:#d4d4d4">  </span><span style="color:#dcdcaa">bindViewTap</span><span style="color:#179fff">()</span><span style="color:#d4d4d4"> </span><span style="color:#179fff">{</span></div>
<div class="ln" style="left:1.5px;top:272.6px">11</div><div class="code" style="left:134.3px;top:272.6px"><span style="color:#d4d4d4">    </span><span style="color:#9cdcfe">ft</span><span style="color:#d4d4d4">.</span><span style="color:#dcdcaa">navigateTo</span><span style="color:#ffd700">(</span><span style="color:#da70d6">{</span></div>
<div class="ln" style="left:1.5px;top:310.6px">12</div><div class="code" style="left:134.3px;top:310.6px"><span style="color:#d4d4d4">      </span><span style="color:#9cdcfe">url:</span><span style="color:#d4d4d4"> </span><span style="color:#ce9178">'../logs/logs'</span></div>
<div class="ln" style="left:1.5px;top:348.6px">13</div><div class="code" style="left:134.3px;top:348.6px"><span style="color:#d4d4d4">    </span><span style="color:#da70d6">}</span><span style="color:#ffd700">)</span></div>
<div class="ln" style="left:1.5px;top:386.6px">14</div><div class="code" style="left:134.3px;top:386.6px"><span style="color:#d4d4d4">    </span><span style="color:#9cdcfe">console</span><span style="color:#d4d4d4">.</span><span style="color:#dcdcaa">log</span><span style="color:#ffd700">(</span><span style="color:#b5cea8">456</span><span style="color:#ffd700">)</span></div>
<div class="ln" style="left:1.5px;top:424.6px">15</div><div class="code" style="left:134.3px;top:424.6px"><span style="color:#d4d4d4">  </span><span style="color:#179fff">}</span><span style="color:#d4d4d4">,</span></div>
<div class="ln" style="left:1.5px;top:462.6px">16</div><div class="code" style="left:134.3px;top:462.6px"><span style="color:#d4d4d4">  </span><span style="color:#dcdcaa">onLoad</span><span style="color:#179fff">()</span><span style="color:#d4d4d4"> </span><span style="color:#179fff">{</span></div>
<div class="abs" style="left:926px;top:0;width:110px;height:505px;background:#1e1e1e"></div><svg style="left:926px;top:0px" width="110" height="120" viewBox="0 0 110 120"><rect x="0" y="36" width="110" height="4" fill="#22384f" opacity="0.8"/><rect x="0" y="0.8" width="4" height="2.4" fill="#6a9955" opacity="0.46"/><rect x="6" y="0.8" width="16" height="2.4" fill="#6a9955" opacity="0.46"/><rect x="0" y="4.8" width="4" height="2.4" fill="#6a9955" opacity="0.46"/><rect x="6" y="4.8" width="24" height="2.4" fill="#6a9955" opacity="0.46"/><rect x="0" y="8.8" width="10" height="2.4" fill="#569cd6" opacity="0.46"/><rect x="12" y="8.8" width="6" height="2.4" fill="#4fc1ff" opacity="0.46"/><rect x="20" y="8.8" width="2" height="2.4" fill="#d4d4d4" opacity="0.46"/><rect x="24" y="8.8" width="12" height="2.4" fill="#dcdcaa" opacity="0.46"/><rect x="36" y="8.8" width="4" height="2.4" fill="#c8c8c8" opacity="0.46"/><rect x="0" y="16.8" width="8" height="2.4" fill="#dcdcaa" opacity="0.46"/><rect x="8" y="16.8" width="2" height="2.4" fill="#c8c8c8" opacity="0.46"/><rect x="10" y="16.8" width="2" height="2.4" fill="#c8c8c8" opacity="0.46"/><rect x="4" y="20.8" width="8" height="2.4" fill="#9cdcfe" opacity="0.46"/><rect x="12" y="20.8" width="2" height="2.4" fill="#9cdcfe" opacity="0.46"/><rect x="16" y="20.8" width="2" height="2.4" fill="#c8c8c8" opacity="0.46"/><rect x="8" y="24.8" width="12" height="2.4" fill="#9cdcfe" opacity="0.46"/><rect x="22" y="24.8" width="4" height="2.4" fill="#ce9178" opacity="0.46"/><rect x="26" y="24.8" width="2" height="2.4" fill="#d4d4d4" opacity="0.46"/><rect x="4" y="28.8" width="2" height="2.4" fill="#c8c8c8" opacity="0.46"/><rect x="6" y="28.8" width="2" height="2.4" fill="#d4d4d4" opacity="0.46"/><rect x="4" y="32.8" width="4" height="2.4" fill="#6a9955" opacity="0.46"/><rect x="10" y="32.8" width="24" height="2.4" fill="#6a9955" opacity="0.46"/><rect x="4" y="36.8" width="22" height="2.4" fill="#dcdcaa" opacity="0.46"/><rect x="26" y="36.8" width="4" height="2.4" fill="#c8c8c8" opacity="0.46"/><rect x="32" y="36.8" width="2" height="2.4" fill="#c8c8c8" opacity="0.46"/><rect x="8" y="40.8" width="4" height="2.4" fill="#9cdcfe" opacity="0.46"/><rect x="12" y="40.8" width="2" height="2.4" fill="#d4d4d4" opacity="0.46"/><rect x="14" y="40.8" width="20" height="2.4" fill="#dcdcaa" opacity="0.46"/><rect x="34" y="40.8" width="2" height="2.4" fill="#c8c8c8" opacity="0.46"/><rect x="36" y="40.8" width="2" height="2.4" fill="#c8c8c8" opacity="0.46"/><rect x="12" y="44.8" width="8" height="2.4" fill="#9cdcfe" opacity="0.46"/><rect x="22" y="44.8" width="28" height="2.4" fill="#ce9178" opacity="0.46"/><rect x="8" y="48.8" width="2" height="2.4" fill="#c8c8c8" opacity="0.46"/><rect x="10" y="48.8" width="2" height="2.4" fill="#c8c8c8" opacity="0.46"/><rect x="8" y="52.8" width="14" height="2.4" fill="#9cdcfe" opacity="0.46"/><rect x="22" y="52.8" width="2" height="2.4" fill="#d4d4d4" opacity="0.46"/><rect x="24" y="52.8" width="6" height="2.4" fill="#dcdcaa" opacity="0.46"/><rect x="30" y="52.8" width="2" height="2.4" fill="#c8c8c8" opacity="0.46"/><rect x="32" y="52.8" width="6" height="2.4" fill="#b5cea8" opacity="0.46"/><rect x="38" y="52.8" width="2" height="2.4" fill="#c8c8c8" opacity="0.46"/><rect x="4" y="56.8" width="2" height="2.4" fill="#c8c8c8" opacity="0.46"/><rect x="6" y="56.8" width="2" height="2.4" fill="#d4d4d4" opacity="0.46"/><rect x="4" y="60.8" width="12" height="2.4" fill="#dcdcaa" opacity="0.46"/><rect x="16" y="60.8" width="4" height="2.4" fill="#c8c8c8" opacity="0.46"/><rect x="22" y="60.8" width="2" height="2.4" fill="#c8c8c8" opacity="0.46"/><rect x="8" y="64.8" width="8" height="2.4" fill="#569cd6" opacity="0.46"/><rect x="16" y="64.8" width="2" height="2.4" fill="#d4d4d4" opacity="0.46"/><rect x="18" y="64.8" width="14" height="2.4" fill="#dcdcaa" opacity="0.46"/><rect x="32" y="64.8" width="2" height="2.4" fill="#c8c8c8" opacity="0.46"/><rect x="34" y="64.8" width="2" height="2.4" fill="#c8c8c8" opacity="0.46"/><rect x="12" y="68.8" width="12" height="2.4" fill="#9cdcfe" opacity="0.46"/><rect x="26" y="68.8" width="12" height="2.4" fill="#ce9178" opacity="0.46"/><rect x="40" y="68.8" width="12" height="2.4" fill="#ce9178" opacity="0.46"/><rect x="8" y="72.8" width="2" height="2.4" fill="#c8c8c8" opacity="0.46"/><rect x="10" y="72.8" width="2" height="2.4" fill="#c8c8c8" opacity="0.46"/><rect x="4" y="76.8" width="2" height="2.4" fill="#c8c8c8" opacity="0.46"/><rect x="0" y="80.8" width="2" height="2.4" fill="#c8c8c8" opacity="0.46"/><rect x="2" y="80.8" width="2" height="2.4" fill="#c8c8c8" opacity="0.46"/></svg><div class="abs" style="left:1036px;top:0;width:1px;height:505px;background:#3a3a3a"></div><div class="abs" style="left:1036px;top:0;width:27px;height:1px;background:#333"></div><div class="abs" style="left:1037px;top:130px;width:24px;height:4px;background:#868683"></div></div>
<!-- PANEL -->
<style>
.dt{position:absolute;top:870px;height:38px;line-height:38px;font-size:26px;color:#9a9a9a;white-space:nowrap}
.dv{position:absolute;top:925px;width:2px;height:31px;background:#4a4c50}
.sg{position:absolute;font-family:"Liberation Sans","Noto Sans CJK SC",sans-serif;white-space:nowrap}
</style>
<div id="panel" class="abs" style="left:516px;top:797px;width:2131px;height:699px;background:#1e1e1e"></div>
<div class="abs" style="left:516px;top:796px;width:2131px;height:2px;background:#434343"></div>
<div class="abs" style="left:516px;top:797px;width:164px;height:2.400px;background:#e7e7e7"></div>
<svg style="left:534px;top:820px" width="26" height="22" viewBox="0 0 26 22"><path fill-rule="evenodd" d="M3.5 0 H22.5 Q26 0 26 3.5 V18 Q26 21.5 22.5 21.5 H3.5 Q0 21.5 0 18 V3.5 Q0 0 3.5 0 Z M5.5 7.5 V17 H20.5 V7.5 Z" fill="#ececec"/></svg>
<div class="abs" style="left:577.200px;top:812px;height:38px;line-height:38px;font-size:26px;color:#e7e7e7;white-space:nowrap">调试器</div>
<!-- devtools tabs -->
<svg style="left:529px;top:872px" width="30" height="28" viewBox="0 0 30 28"><path d="M23.800 8.500 V4 Q23.800 1.200 21 1.200 H4 Q1.200 1.200 1.200 4 V20.500 Q1.200 23.300 4 23.300 H8.500" fill="none" stroke="#919191" stroke-width="2.200"/><path d="M10.5 10 L24.5 14.5 L19.3 17 L26.5 24 L24 26.5 L17 19.3 L14.7 24.5 Z" fill="#919191"/></svg>
<div class="dt" style="left:576.500px">视图</div>
<div class="dt" style="left:669.500px;color:#ebebeb">日志</div>
<div class="dt" style="left:762px">网络</div>
<div class="dt" style="left:853px">资源</div>
<div class="dt" style="left:946px">存储</div>
<div class="dt" style="left:1038px">编译日志</div>
<div class="dt" style="left:1183px">自定义API</div>
<!-- console toolbar -->
<div class="abs" style="left:516px;top:914px;width:2131px;height:53px;background:#292a2d"></div>
<div class="abs" style="left:516px;top:966px;width:2131px;height:2px;background:#4a4c50"></div>
<svg style="left:531px;top:927px" width="32" height="28" viewBox="0 0 32 28"><rect x="1.6" y="1.6" width="28.6" height="24.6" fill="none" stroke="#9a9a9a" stroke-width="2.2"/><path d="M10.2 1.6 V26.2" stroke="#9a9a9a" stroke-width="2.2"/><path d="M15 7.5 L25 14 L15 20.5 Z" fill="#9a9a9a"/></svg>
<svg style="left:590px;top:926px" width="30" height="30" viewBox="0 0 30 30"><circle cx="15" cy="15" r="11.2" fill="none" stroke="#9a9a9a" stroke-width="3.8"/><path d="M7 7.5 L23 22.5" stroke="#9a9a9a" stroke-width="3.8"/></svg>
<div class="dv" style="left:640px"></div>
<div class="sg" style="left:659.5px;top:922px;height:38px;line-height:38px;font-size:26.500px;color:#9aa0a6">top</div>
<svg style="left:707.5px;top:934px" width="15" height="12" viewBox="0 0 15 12"><path d="M0 0 H14.5 L7.25 11.8 Z" fill="#9a9a9a"/></svg>
<div class="dv" style="left:740px"></div>
<svg style="left:761px;top:929px" width="34" height="23" viewBox="0 0 34 23"><path fill-rule="evenodd" d="M17 0.3 C9 0.3 3 6.5 0.8 11.5 C3 16.5 9 22.7 17 22.7 C25 22.7 31 16.5 33.2 11.5 C31 6.5 25 0.3 17 0.3 Z M17 4 A7.5 7.5 0 1 0 17 19 A7.5 7.5 0 1 0 17 4 Z M17 8 A3.5 3.5 0 1 1 17 15 A3.5 3.5 0 1 1 17 8 Z" fill="#9a9a9a"/></svg>
<div class="dv" style="left:814px"></div>
<div class="abs" style="left:828px;top:919px;width:1352px;height:42px;border:2px solid #5c5e61;background:#202124"></div>
<div class="sg" style="left:839.5px;top:923px;height:38px;line-height:38px;font-size:23.700px;color:#8b8f94">Filter</div>
<div class="sg" style="left:2196.5px;top:922px;height:38px;line-height:38px;font-size:23.5px;color:#9aa0a6">Default levels</div>
<svg style="left:2347px;top:934px" width="15" height="12" viewBox="0 0 15 12"><path d="M0 0 H14.5 L7.25 11.8 Z" fill="#9a9a9a"/></svg>
<div class="dv" style="left:2381px"></div>
<div class="abs" style="left:2391px;top:920px;width:166px;height:39px;border:2px solid #46484c;border-radius:5px"></div>
<div class="sg" style="left:2412.5px;top:922px;height:38px;line-height:38px;font-size:22.300px;color:#9aa0a6">1 Issue:</div>
<svg style="left:2501px;top:929px" width="23" height="22" viewBox="0 0 23 22"><path d="M2.5 0 H20.5 Q23 0 23 2.5 V14.5 Q23 17 20.5 17 H5 L0 22 V2.5 Q0 0 2.5 0 Z" fill="#1a73e8"/><path d="M4.5 5.5 H18.5 M4.5 10.5 H14" stroke="#292a2d" stroke-width="2.2"/></svg>
<div class="sg" style="left:2535px;top:922px;height:38px;line-height:38px;font-size:24px;color:#9aa0a6">1</div>
<div class="dv" style="left:2577.5px"></div>
<svg style="left:2600px;top:925px" width="32" height="32" viewBox="0 0 24 24"><path fill="#9a9a9a" d="M19.43 12.98c.04-.32.07-.64.07-.98s-.03-.66-.07-.98l2.11-1.65c.19-.15.24-.42.12-.64l-2-3.46c-.12-.22-.39-.3-.61-.22l-2.49 1c-.52-.4-1.08-.73-1.69-.98l-.38-2.65C14.46 2.18 14.25 2 14 2h-4c-.25 0-.46.18-.49.42l-.38 2.65c-.61.25-1.17.59-1.69.98l-2.49-1c-.23-.09-.49 0-.61.22l-2 3.46c-.13.22-.07.49.12.64l2.11 1.65c-.04.32-.07.65-.07.98s.03.66.07.98l-2.11 1.65c-.19.15-.24.42-.12.64l2 3.46c.12.22.39.3.61.22l2.49-1c.52.4 1.08.73 1.69.98l.38 2.65c.03.24.24.42.49.42h4c.25 0 .46-.18.49-.42l.38-2.65c.61-.25 1.17-.59 1.69-.98l2.49 1c.23.09.49 0 .61-.22l2-3.46c.12-.22.07-.49-.12-.64l-2.11-1.65zM12 15.5c-1.93 0-3.5-1.57-3.5-3.5s1.57-3.5 3.5-3.5 3.500 1.570 3.500 3.500-1.570 3.500-3.500 3.500z"/></svg>
<!-- console body -->
<div class="abs" style="left:516px;top:968px;width:2131px;height:472px;background:#202124"></div>
<div class="abs" style="left:516px;top:1006px;width:2131px;height:2px;background:#3a3a3a"></div>
<div class="abs" style="left:564.500px;top:970px;height:36px;line-height:36px;font-size:22px;color:#e8eaed;white-space:pre;font-family:'Liberation Mono','Noto Serif CJK SC',monospace"><span style="font-size:24px;font-family:'Noto Serif CJK SC',serif">基础库版本</span>: 3.0.47-alpha20230616v08</div>
<div class="abs" style="left:2432.500px;top:974px;height:36px;line-height:36px;font-size:22px;color:#9aa0a6;white-space:pre;text-decoration:underline;text-underline-offset:3px;font-family:'Liberation Mono',monospace">service.js:2</div>
<svg style="left:535px;top:1020px" width="12" height="16" viewBox="0 0 12 16"><path d="M1.5 1.5 L9 8 L1.5 14.5" fill="none" stroke="#367cf1" stroke-width="3.4"/></svg>
<!-- drawer -->
<div class="abs" style="left:516px;top:1440px;width:2131px;height:2px;background:#4a4c50"></div>
<div class="abs" style="left:516px;top:1442px;width:2131px;height:52px;background:#292a2d"></div>
<svg style="left:544px;top:1455px" width="10" height="30" viewBox="0 0 10 30"><circle cx="5" cy="4" r="3" fill="#9a9a9a"/><circle cx="5" cy="14" r="3" fill="#9a9a9a"/><circle cx="5" cy="24" r="3" fill="#9a9a9a"/></svg>
<div class="abs" style="left:572px;top:1442px;width:124px;height:52px;background:#000"></div>
<div class="sg" style="left:591.5px;top:1451px;height:38px;line-height:38px;font-size:23.2px;color:#fff">Console</div>
<svg style="left:2605px;top:1458px" width="20" height="20" viewBox="0 0 20 20"><path d="M1.5 1.5 L18.5 18.5 M18.5 1.5 L1.5 18.5" stroke="#9a9a9a" stroke-width="3.4" fill="none"/></svg>
<div class="abs" style="left:516px;top:1494px;width:2131px;height:2px;background:#545050"></div>
<!-- STATUS BAR -->
<style>.st{position:absolute;top:1496px;height:44px;line-height:48px;font-size:23px;color:#fff;white-space:nowrap;font-family:"Liberation Sans","Noto Sans CJK SC",sans-serif}</style>
<div id="status" class="abs" style="left:0;top:1496px;width:2647px;height:44px;background:#007acc"></div>
<svg style="left:30px;top:1504px" width="28" height="30" viewBox="0 0 28 30"><g fill="none" stroke="#fff" stroke-width="2"><circle cx="8" cy="4.400" r="3.600"/><circle cx="8" cy="24.100" r="3.600"/><circle cx="20.300" cy="9.800" r="3.600"/><path d="M8 8 V20.500 M20 13.400 Q19.500 16.300 14.500 16.600 Q9 17 8.300 20.500"/></g></svg>
<div class="st" style="left:64.500px">master</div>
<svg style="left:161px;top:1506px" width="28" height="28" viewBox="0 0 28 28"><circle cx="13.5" cy="13.5" r="11.6" fill="none" stroke="#fff" stroke-width="2.4"/><path d="M8.5 8.5 L18.5 18.5 M18.5 8.5 L8.5 18.5" stroke="#fff" stroke-width="2.4"/></svg>
<div class="st" style="left:194px">0</div>
<svg style="left:214px;top:1506px" width="28" height="26" viewBox="0 0 28 26"><path d="M13.5 2.5 L25 24 H2 Z" fill="none" stroke="#fff" stroke-width="2.4" stroke-linejoin="miter"/><path d="M13.5 10 V17.5 M13.5 19.5 V22" stroke="#fff" stroke-width="2.6"/></svg>
<div class="st" style="left:248px">0</div>
<div class="st" style="left:2046px;font-size:23.600px;letter-spacing:0.2px">行 3，列 47</div>
<div class="st" style="left:2195.5px;letter-spacing:-2px">LF</div>
<div class="st" style="left:2242px;letter-spacing:-0.6px">UTF-8</div>
<div class="st" style="left:2329px">空格: 4</div>
<div class="st" style="left:2426px;letter-spacing:-0.3px">WXML</div>
<svg style="left:2520px;top:1504px" width="28" height="30" viewBox="0 0 28 30"><path d="M13 4 Q5.5 4.5 5.5 13 V19 L2.5 23 V24.5 H23.500 V23 L20.500 19 V15" fill="none" stroke="#fff" stroke-width="2.4"/><path d="M10 25 Q10 28.500 13 28.500 Q16 28.500 16 25 Z" fill="#fff"/><circle cx="20.500" cy="6.500" r="5.300" fill="#fff"/></svg>
<div class="st" style="left:2555px">1</div>
<svg style="left:2592px;top:1505px" width="26" height="26" viewBox="0 0 26 26"><rect x="1.700" y="2.700" width="22.600" height="20.600" fill="none" stroke="#fff" stroke-width="2.400"/><path d="M1.700 8.500 H24.300" stroke="#fff" stroke-width="2.400"/></svg>
<!-- ANNOTATION ARROW -->
<svg style="left:0;top:0" width="2647" height="1540" viewBox="0 0 2647 1540"><path d="M1300 379 L1738 539.500" stroke="#eb1c26" stroke-width="6.400" stroke-linecap="round" fill="none"/><path d="M1752.300 545.300 L1731 526.800 L1737 539 L1723 548.800 Z" fill="#eb1c26" stroke="#eb1c26" stroke-width="1.500" stroke-linejoin="round"/></svg>
</div>
</body>
</html>
